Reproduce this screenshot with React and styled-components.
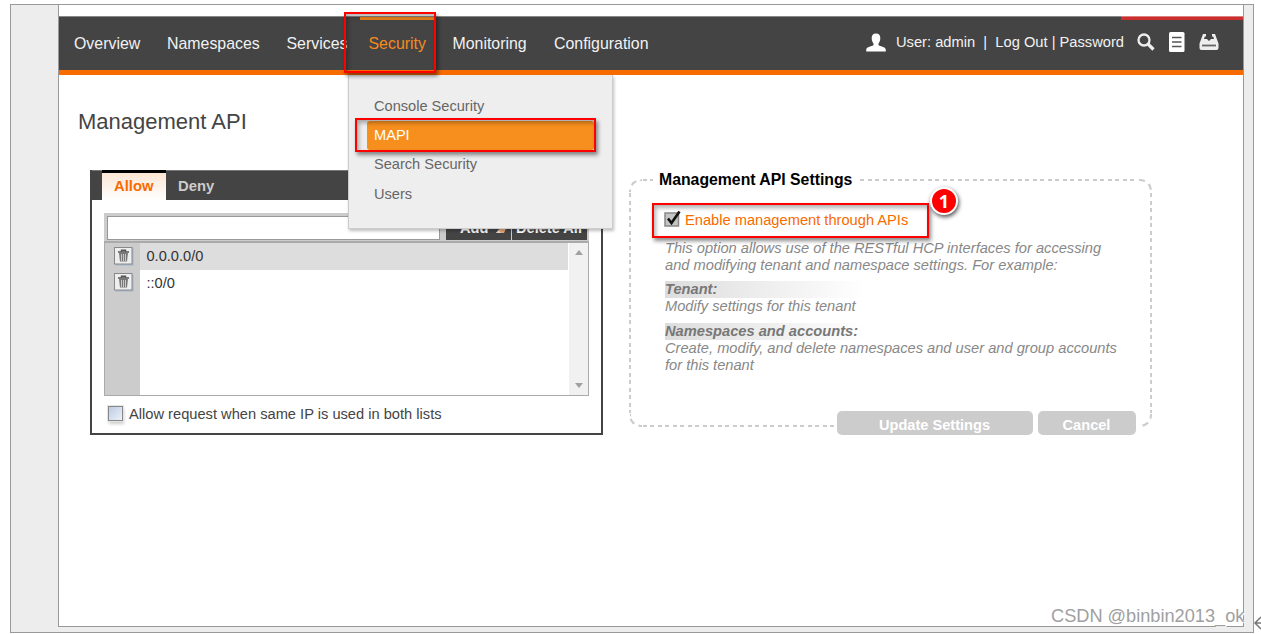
import styled, { createGlobalStyle, css } from 'styled-components'

const GlobalStyle = createGlobalStyle`
    * {
        box-sizing: border-box;
    }

    body {
        margin: 0;
        background: #fff;
        font-family: 'Liberation Sans', Arial, sans-serif;
        overflow: hidden;
    }

    p, h1, h2 {
        margin: 0;
    }
`

const Desk = styled.div`
    position: relative;
    width: 1261px;
    height: 634px;
    padding: 4px 7px 1px 10px;
`

const Frame = styled.div`
    height: 629px;
    padding: 0 9px 6px 47px;
    background: #ededed;
    border: 1px solid #999;
`

const Page = styled.div`
    height: 622px;
    padding-top: 11px;
    background: #fff;
    border: 1px solid #999;
    border-top: 0;
`

const NavBar = styled.header`
    position: relative;
    z-index: 2;
    display: flex;
    justify-content: space-between;
    height: 59px;
    background: #444;
    border-top: 1px solid #888;
    border-bottom: 5px solid #f76b00;
    color: #f2f2f2;
`

const NavLinks = styled.nav`
    display: flex;
    gap: 9px;
    padding-left: 6px;
`

const NavItem = styled.a`
    height: 53px;
    width: ${({ $width }) => $width}px;
    padding-left: 9px;
    border-top: 3px solid ${({ $active }) => ($active ? '#e8821e' : 'transparent')};
    color: ${({ $active }) => ($active ? '#f68b1f' : '#f2f2f2')};
    font-size: 15.9px;
    line-height: 48px;
    white-space: nowrap;
`

const UserArea = styled.div`
    display: flex;
    width: 377px;
    height: 50px;
    align-items: center;
    font-size: 14.7px;
    white-space: pre;

    & svg {
        display: block;
        flex: none;
    }
`

const UserText = styled.span`
    width: 241px;
    margin-left: 10px;
`

const Tools = styled.div`
    display: flex;
    align-items: center;
    gap: 14px;
`

const RedStripe = styled.i`
    position: absolute;
    top: -1px;
    right: 0;
    width: 122px;
    height: 4px;
    background: #cc2e2e;
    border-top: 1px solid #d98080;
`

const Marker = styled.i`
    position: absolute;
    left: ${({ $x }) => $x}px;
    top: ${({ $y }) => $y}px;
    width: ${({ $w }) => $w}px;
    height: ${({ $h }) => $h}px;
    border: 2px solid #f00;
    box-shadow: 2px 3px 4px rgba(0, 0, 0, 0.45), inset 2px 3px 4px rgba(0, 0, 0, 0.3);
    pointer-events: none;
    z-index: 3;
`

const Menu = styled.div`
    position: absolute;
    left: 289px;
    top: 58px;
    width: 265px;
    height: 154px;
    padding: 17px 18px 0 18px;
    background: #eee;
    border: 1px solid #ccc;
    border-top: 0;
    box-shadow: 1px 2px 3px rgba(0, 0, 0, 0.25);
`

const MenuItem = styled.a`
    display: block;
    height: 29.2px;
    padding-left: 7px;
    border-radius: 3px;
    color: ${({ $active }) => ($active ? '#fff' : '#666')};
    font-size: 14.6px;
    line-height: 29.6px;
    ${({ $active }) => $active && css`
        background: #f78f1e;
    `}
`

const Content = styled.main`
    padding: 33px 0 0 19px;
`

const Title = styled.h1`
    height: 62px;
    color: #444;
    font-size: 22px;
    font-weight: 400;
    line-height: 27px;
`

const Columns = styled.div`
    display: flex;
    gap: 26px;
    padding-left: 12px;
`

const Panel = styled.section`
    width: 513px;
    height: 265px;
    border: 2px solid #444;
    border-top: 0;
`

const Tabs = styled.div`
    display: flex;
    height: 30px;
    padding-left: 10px;
    background: #444;
    border-top: 1px solid #777;
`

const Tab = styled.span`
    width: 64px;
    height: 30px;
    margin-top: -1px;
    padding-left: 12px;
    border-top: 3px solid ${({ $active }) => ($active ? '#000' : 'transparent')};
    color: ${({ $active }) => ($active ? '#f76b00' : '#ccc')};
    font-size: 14.8px;
    font-weight: 700;
    line-height: 26px;
    ${({ $active }) => $active && css`
        background: linear-gradient(#fce6d4, #fff);
    `}
`

const AddRow = styled.div`
    display: flex;
    width: 485px;
    height: 28px;
    margin: 13px 0 0 12px;
    padding: 3px 2px 1px 3px;
    background: #ccc;
`

const IpInput = styled.div`
    width: 333px;
    height: 24px;
    margin-right: 5px;
    background: #fff;
    border: 1px solid #999;
`

const DarkButton = styled.button`
    display: flex;
    align-items: center;
    gap: 7px;
    width: ${({ $width }) => $width}px;
    height: 24px;
    margin-left: 1px;
    padding: 0 0 1px ${({ $pad }) => $pad}px;
    background: linear-gradient(#666, #444 60%);
    border: 0;
    color: #fff;
    font: 700 14.6px 'Liberation Sans', Arial, sans-serif;
    white-space: nowrap;
`

const List = styled.div`
    display: flex;
    width: 485px;
    height: 155px;
    margin-left: 12px;
    border: 1px solid #aaa;
    border-top-width: 2px;
`

const Rows = styled.div`
    flex: 1;
    background: linear-gradient(90deg, #ccc 35px, #fff 35px);
`

const Row = styled.div`
    display: flex;
    align-items: center;
    height: 26.5px;
    padding-left: 8.5px;
    color: #333;
    font-size: 14.6px;
    ${({ $shaded }) => $shaded && css`
        background: linear-gradient(90deg, #ccc 35px, #ddd 35px);
    `}

    & svg {
        margin-right: 13px;
    }
`

const Scroll = styled.div`
    display: flex;
    flex-direction: column;
    align-items: center;
    justify-content: space-between;
    width: 20px;
    padding: 7px 0;
    background: #f1f1f1;
    border-left: 1px solid #fff;
`

const Arrow = styled.i`
    border: 4px solid transparent;
    border-width: ${({ $down }) => ($down ? '5px 4px 0' : '0 4px 5px')};
    border-${({ $down }) => ($down ? 'top' : 'bottom')}-color: #a0a0a0;
`

const SameIp = styled.label`
    display: flex;
    align-items: center;
    height: 36px;
    padding-left: 16px;
    color: #444;
    font-size: 14.67px;
`

const Box = styled.i`
    display: block;
    width: 15px;
    height: 15px;
    margin: -1px 6px 0 0;
    background: linear-gradient(135deg, #bccbe4, #edf2fa);
    border: 1px solid #888;
    box-shadow: 0 0 0 1px #e4e4e4, 1px 3px 3px rgba(0, 0, 0, 0.2);
`

const dash = angle => css`repeating-linear-gradient(${angle}, #ccc 0 4px, transparent 4px 7.5px)`

const Settings = styled.section`
    position: relative;
    width: 523px;
    height: 248px;
    margin-top: 9px;
    padding: 2px 0 0 36px;
    background-image: ${dash('90deg')}, ${dash('90deg')}, ${dash('180deg')}, ${dash('180deg')};
    background-position: 14px 0, 14px 100%, 0 14px, 100% 14px;
    background-repeat: no-repeat;
    background-size: 495px 2px, 495px 2px, 2px 220px, 2px 220px;
`

const Corner = styled.i`
    position: absolute;
    ${({ $v }) => $v}: 0;
    ${({ $h }) => $h}: 0;
    width: 13px;
    height: 13px;
    border: 0 dashed #ccc;
    border-${({ $v }) => $v}-width: 2px;
    border-${({ $h }) => $h}-width: 2px;
    border-${({ $v }) => $v}-${({ $h }) => $h}-radius: 12px;
`

const Legend = styled.h2`
    width: 207px;
    height: 20px;
    margin: -12px 0 0 -12px;
    padding-left: 6px;
    background: #fff;
    color: #000;
    font-size: 15.8px;
    font-weight: 700;
    line-height: 21px;
    white-space: nowrap;
`

const Enable = styled.label`
    display: flex;
    align-items: center;
    height: 22px;
    margin-top: 20px;
    color: #f76b00;
    font-size: 14.67px;

    & svg {
        margin: -4px 2px 0 -1px;
    }
`

const Note = styled.div`
    margin-top: 9px;
    color: #888;
    font-size: 14.67px;
    font-style: italic;
    line-height: 17px;
    white-space: nowrap;
`

const Term = styled.p`
    width: 200px;
    margin-top: 7.4px;
    background: linear-gradient(90deg, #ddd, #fff);
    color: #777;
    font-weight: 700;
`

const Actions = styled.div`
    position: absolute;
    right: 16px;
    bottom: -8px;
    display: flex;
    gap: 5px;
    background: #fff;
`

const Action = styled.button`
    width: ${({ $width }) => $width}px;
    height: 24px;
    padding: 3px 1px 0 0;
    background: #ccc;
    border: 0;
    border-radius: 5px;
    color: #fff;
    font: 700 14.6px 'Liberation Sans', Arial, sans-serif;
`

const Badge = styled.b`
    position: absolute;
    left: 301px;
    top: 8px;
    width: 28px;
    height: 28px;
    background: #f00;
    border: 2px solid #fff;
    border-radius: 50%;
    box-shadow: 1px 2px 4px rgba(0, 0, 0, 0.7);
    color: #fff;
    font: 700 18px/24px 'Open Sans', sans-serif;
    text-align: center;
    z-index: 4;
`

const Watermark = styled.span`
    position: absolute;
    left: 1051px;
    top: 605px;
    color: #a0a0a0;
    font-size: 18.2px;
    line-height: 22px;
    text-shadow: 1px 1px 0 #fff;
    white-space: nowrap;
`

const ReturnMark = styled.svg`
    position: absolute;
    left: 1253px;
    top: 615px;
`

const links = [
    ['Overview', 84],
    ['Namespaces', 110.5],
    ['Services', 73],
    ['Security', 75],
    ['Monitoring', 92.5],
    ['Configuration', 110],
]

function UserIcon() {
    return (
        <svg width="20" height="19" viewBox="0 0 20 19" fill="#fff">
            <path d="M10 0.500c3 0 4.400 1.900 4.300 4.800c-.1 2.400-.8 4-1.800 5.100v1.600c1 1.600 7.300 1.500 7.300 4.700v1.800H.2v-1.800c0-3.200 6.300-3.100 7.300-4.700v-1.600C6.500 9.300 5.800 7.700 5.700 5.300C5.600 2.400 7 .5 10 .5Z" />
        </svg>
    )
}

function SearchIcon() {
    return (
        <svg width="18" height="18" viewBox="0 0 18 18" fill="none" stroke="#eee">
            <circle cx="7" cy="7" r="5.500" strokeWidth="2.300" />
            <path d="m11 11 5.500 5.500" strokeWidth="3.200" />
        </svg>
    )
}

function PageIcon() {
    return (
        <svg width="16" height="20" viewBox="0 0 16 20">
            <rect width="15.500" height="20" rx="1.500" fill="#fff" />
            <path d="M3 5.500h9.500M3 10h9.500M3 14.500h9.500" stroke="#555" strokeWidth="1.700" />
        </svg>
    )
}

function TrayIcon() {
    return (
        <svg width="20" height="18" viewBox="0 0 20 18">
            <path d="M4 1h3v2.500H5.800L5 6l5 3 5-3-.8-2.500H13V1h3l3.500 9.500V15q0 2-2 2h-15q-2 0-2-2v-4.500Z" fill="#eee" />
            <path d="M5 6h10l1 4H4Z" fill="#eee" />
            <path d="M8.800 2h2.400v3H13l-3 3-3-3h1.800Z" fill="#444" />
            <path d="M3 12.500h14" stroke="#666" strokeWidth="1.800" />
        </svg>
    )
}

function PencilIcon() {
    return (
        <svg width="14" height="14" viewBox="0 0 14 14">
            <path d="m1 12 7-9 4 2.500L9 12Z" fill="#e9a878" />
            <path d="m1 12 3-3 2 3Z" fill="#ddd" />
        </svg>
    )
}

function TrashIcon() {
    return (
        <svg width="20" height="19" viewBox="0 0 20 19">
            <rect x="1.500" y="1.500" width="18" height="17" fill="#8da9cf" opacity=".6" />
            <rect x=".5" y=".5" width="17.500" height="16.500" fill="#eee" stroke="#888" />
            <path d="M4 5h11M7.500 4.500V3.200h4v1.300" fill="none" stroke="#555" strokeWidth="1.400" />
            <path d="M5 6h9l-1 8.500H6Z" fill="#777" />
            <path d="M7.500 7v7M9.500 7v7M11.500 7v7" stroke="#ddd" strokeWidth=".8" />
        </svg>
    )
}

function CheckedIcon() {
    return (
        <svg width="19" height="20" viewBox="0 0 19 20">
            <rect x="1" y="5" width="13.500" height="13" fill="#c4c4c4" stroke="#888" strokeWidth="1.500" />
            <path d="M4 10.500 7.500 15 15.500 3.500" fill="none" stroke="#111" strokeWidth="2.600" />
        </svg>
    )
}

export default function App() {
    return (
        <>
            <GlobalStyle />
            <Desk>
                <Frame>
                    <Page>
                        <NavBar>
                            <NavLinks>
                                {links.map(([name, width]) => (
                                    <NavItem key={name} $width={width} $active={name === 'Security'}>{name}</NavItem>
                                ))}
                            </NavLinks>
                            <UserArea>
                                <UserIcon />
                                <UserText>User: admin  |  Log Out | Password</UserText>
                                <Tools>
                                    <SearchIcon />
                                    <PageIcon />
                                    <TrayIcon />
                                </Tools>
                            </UserArea>
                            <RedStripe />
                            <Menu>
                                <MenuItem>Console Security</MenuItem>
                                <MenuItem $active>MAPI</MenuItem>
                                <MenuItem>Search Security</MenuItem>
                                <MenuItem>Users</MenuItem>
                                <Marker $x={6} $y={43} $w={241} $h={34} />
                            </Menu>
                            <Marker $x={285} $y={-5} $w={92} $h={61} />
                        </NavBar>
                        <Content>
                            <Title>Management API</Title>
                            <Columns>
                                <Panel>
                                    <Tabs>
                                        <Tab $active>Allow</Tab>
                                        <Tab>Deny</Tab>
                                    </Tabs>
                                    <AddRow>
                                        <IpInput />
                                        <DarkButton $width={65} $pad={14}>Add<PencilIcon /></DarkButton>
                                        <DarkButton $width={75} $pad={4}>Delete All</DarkButton>
                                    </AddRow>
                                    <List>
                                        <Rows>
                                            <Row $shaded><TrashIcon />0.0.0.0/0</Row>
                                            <Row><TrashIcon />::0/0</Row>
                                        </Rows>
                                        <Scroll>
                                            <Arrow />
                                            <Arrow $down />
                                        </Scroll>
                                    </List>
                                    <SameIp><Box />Allow request when same IP is used in both lists</SameIp>
                                </Panel>
                                <Settings>
                                    <Corner $v="top" $h="left" />
                                    <Corner $v="top" $h="right" />
                                    <Corner $v="bottom" $h="left" />
                                    <Corner $v="bottom" $h="right" />
                                    <Legend>Management API Settings</Legend>
                                    <Enable><CheckedIcon />Enable management through APIs</Enable>
                                    <Note>
                                        <p>This option allows use of the RESTful HCP interfaces for accessing</p>
                                        <p>and modifying tenant and namespace settings. For example:</p>
                                        <Term>Tenant:</Term>
                                        <p>Modify settings for this tenant</p>
                                        <Term>Namespaces and accounts:</Term>
                                        <p>Create, modify, and delete namespaces and user and group accounts</p>
                                        <p>for this tenant</p>
                                    </Note>
                                    <Actions>
                                        <Action $width={196}>Update Settings</Action>
                                        <Action $width={98}>Cancel</Action>
                                    </Actions>
                                    <Marker $x={23} $y={24} $w={277} $h={35} />
                                    <Badge>1</Badge>
                                </Settings>
                            </Columns>
                        </Content>
                    </Page>
                </Frame>
                <Watermark>CSDN @binbin2013_ok</Watermark>
                <ReturnMark width="8" height="16" viewBox="0 0 8 16" fill="none" stroke="#777" strokeWidth="1.500">
                    <path d="M8 2 2 8l6 6M2 8h6" />
                </ReturnMark>
            </Desk>
        </>
    )
}
